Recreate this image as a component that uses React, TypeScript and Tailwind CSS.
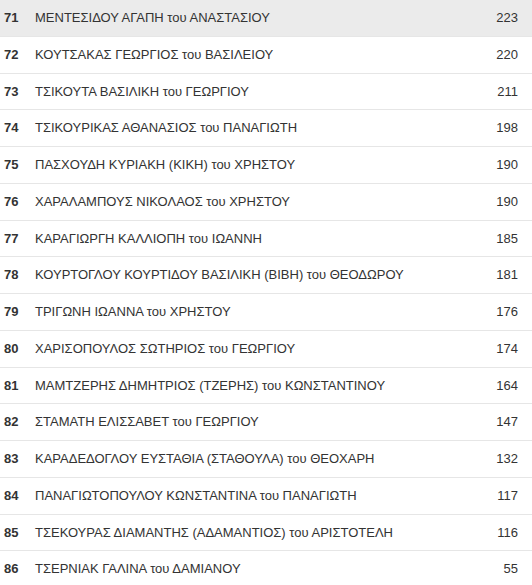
import React from "react";

type Row = { rank: number; name: string; votes: number };

// Κατάταξη υποψηφίων (σταυροί προτίμησης)
const rows: Row[] = [
  { rank: 71, name: "ΜΕΝΤΕΣΙΔΟΥ ΑΓΑΠΗ του ΑΝΑΣΤΑΣΙΟΥ", votes: 223 },
  { rank: 72, name: "ΚΟΥΤΣΑΚΑΣ ΓΕΩΡΓΙΟΣ του ΒΑΣΙΛΕΙΟΥ", votes: 220 },
  { rank: 73, name: "ΤΣΙΚΟΥΤΑ ΒΑΣΙΛΙΚΗ του ΓΕΩΡΓΙΟΥ", votes: 211 },
  { rank: 74, name: "ΤΣΙΚΟΥΡΙΚΑΣ ΑΘΑΝΑΣΙΟΣ του ΠΑΝΑΓΙΩΤΗ", votes: 198 },
  { rank: 75, name: "ΠΑΣΧΟΥΔΗ ΚΥΡΙΑΚΗ (ΚΙΚΗ) του ΧΡΗΣΤΟΥ", votes: 190 },
  { rank: 76, name: "ΧΑΡΑΛΑΜΠΟΥΣ ΝΙΚΟΛΑΟΣ του ΧΡΗΣΤΟΥ", votes: 190 },
  { rank: 77, name: "ΚΑΡΑΓΙΩΡΓΗ ΚΑΛΛΙΟΠΗ του ΙΩΑΝΝΗ", votes: 185 },
  { rank: 78, name: "ΚΟΥΡΤΟΓΛΟΥ ΚΟΥΡΤΙΔΟΥ ΒΑΣΙΛΙΚΗ (ΒΙΒΗ) του ΘΕΟΔΩΡΟΥ", votes: 181 },
  { rank: 79, name: "ΤΡΙΓΩΝΗ ΙΩΑΝΝΑ του ΧΡΗΣΤΟΥ", votes: 176 },
  { rank: 80, name: "ΧΑΡΙΣΟΠΟΥΛΟΣ ΣΩΤΗΡΙΟΣ του ΓΕΩΡΓΙΟΥ", votes: 174 },
  { rank: 81, name: "ΜΑΜΤΖΕΡΗΣ ΔΗΜΗΤΡΙΟΣ (ΤΖΕΡΗΣ) του ΚΩΝΣΤΑΝΤΙΝΟΥ", votes: 164 },
  { rank: 82, name: "ΣΤΑΜΑΤΗ ΕΛΙΣΣΑΒΕΤ του ΓΕΩΡΓΙΟΥ", votes: 147 },
  { rank: 83, name: "ΚΑΡΑΔΕΔΟΓΛΟΥ ΕΥΣΤΑΘΙΑ (ΣΤΑΘΟΥΛΑ) του ΘΕΟΧΑΡΗ", votes: 132 },
  { rank: 84, name: "ΠΑΝΑΓΙΩΤΟΠΟΥΛΟΥ ΚΩΝΣΤΑΝΤΙΝΑ του ΠΑΝΑΓΙΩΤΗ", votes: 117 },
  { rank: 85, name: "ΤΣΕΚΟΥΡΑΣ ΔΙΑΜΑΝΤΗΣ (ΑΔΑΜΑΝΤΙΟΣ) του ΑΡΙΣΤΟΤΕΛΗ", votes: 116 },
  { rank: 86, name: "ΤΣΕΡΝΙΑΚ ΓΑΛΙΝΑ του ΔΑΜΙΑΝΟΥ", votes: 55 },
];

const App = () => {
  return (
    <div className="w-[532px] h-[585px] overflow-hidden bg-white font-['Liberation_Sans',Arial,sans-serif] text-[13px] text-[#333]">
      {rows.map((row, i) => (
        <div
          key={row.rank}
          className={
            i === 0
              ? "flex items-center h-[36.75px] border-b border-[#e6e6e6] bg-[#ebebeb]"
              : "flex items-center h-[36.75px] border-b border-[#e6e6e6]"
          }
        >
          <div className="w-[35px] pl-[4px] font-bold text-[#333]">{row.rank}</div>
          <div className="flex-1">{row.name}</div>
          <div className="pr-[14px] text-right text-[#333]">{row.votes}</div>
        </div>
      ))}
    </div>
  );
};

export default App;
